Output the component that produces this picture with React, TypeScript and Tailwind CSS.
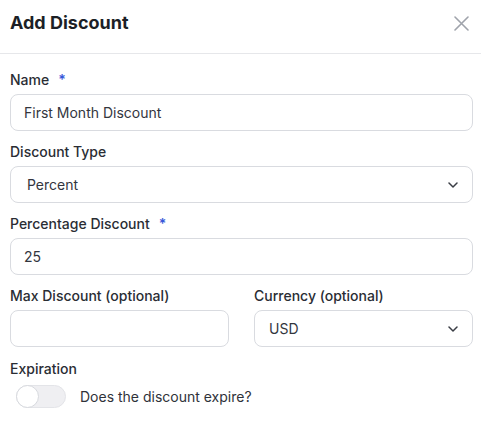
import React from 'react';

const font = { fontFamily: 'Inter, "Noto Sans", sans-serif' };

function Label({ text, required }: { text: string; required?: boolean }) {
  return (
    <div className="h-5 mb-1 flex items-center text-[14px] leading-5 font-medium text-[#2a2d34]">
      <span>{text}</span>
      {required && <span className="ml-[9px] text-[#3656d8] font-semibold">*</span>}
    </div>
  );
}

function Chevron() {
  return (
    <svg width="10" height="6" viewBox="0 0 10 6" fill="none" className="shrink-0">
      <path d="M1 1l4 4 4-4" stroke="#3a3d45" strokeWidth="1.5" strokeLinecap="round" strokeLinejoin="round" />
    </svg>
  );
}

function TextBox({ value }: { value: string }) {
  return (
    <div className="h-[37px] rounded-lg border border-[#d9dbe0] bg-white px-[13px] flex items-center text-[14px] text-[#33363e]">
      {value}
    </div>
  );
}

function SelectBox({ value, pad }: { value: string; pad: string }) {
  return (
    <div className={`h-[37px] rounded-lg border border-[#d9dbe0] bg-white ${pad} pr-[14px] flex items-center justify-between text-[14px] text-[#33363e]`}>
      <span>{value}</span>
      <Chevron />
    </div>
  );
}

export default function App() {
  return (
    <div className="w-[481px] h-[425px] bg-white overflow-hidden" style={font}>
      <div className="h-[54px] border-b border-[#e6e7ea] pl-[10px] pr-[12px] flex items-center justify-between">
        <h2 className="text-[18px] font-bold text-[#1c1f26] -mt-[9px]">Add Discount</h2>
        <svg width="15" height="15" viewBox="0 0 15 15" fill="none" className="-mt-[7px]">
          <path d="M1 1l13 13M14 1L1 14" stroke="#9fa3ab" strokeWidth="1.6" strokeLinecap="round" />
        </svg>
      </div>

      <div className="pl-[10px] pr-[8px] pt-[16px] flex flex-col gap-[11px]">
        <div>
          <Label text="Name" required />
          <TextBox value="First Month Discount" />
        </div>
        <div>
          <Label text="Discount Type" />
          <SelectBox value="Percent" pad="pl-[16px]" />
        </div>
        <div>
          <Label text="Percentage Discount" required />
          <TextBox value="25" />
        </div>
        <div className="grid grid-cols-2 gap-[25px]">
          <div>
            <Label text="Max Discount (optional)" />
            <TextBox value="" />
          </div>
          <div>
            <Label text="Currency (optional)" />
            <SelectBox value="USD" pad="pl-[14px]" />
          </div>
        </div>
        <div>
          <div className="h-5 flex items-center text-[14px] font-medium text-[#2a2d34]">Expiration</div>
          <div className="mt-[7px] pl-[6px] flex items-center gap-[14px]">
            <div className="w-[50px] h-[23px] rounded-full bg-[#efeff2] border border-[#e3e4e8] flex items-center">
              <div className="w-[23px] h-[23px] -ml-px rounded-full bg-white border border-[#d7d9de]" />
            </div>
            <span className="text-[14px] text-[#2f323a]">Does the discount expire?</span>
          </div>
        </div>
      </div>
    </div>
  );
}
